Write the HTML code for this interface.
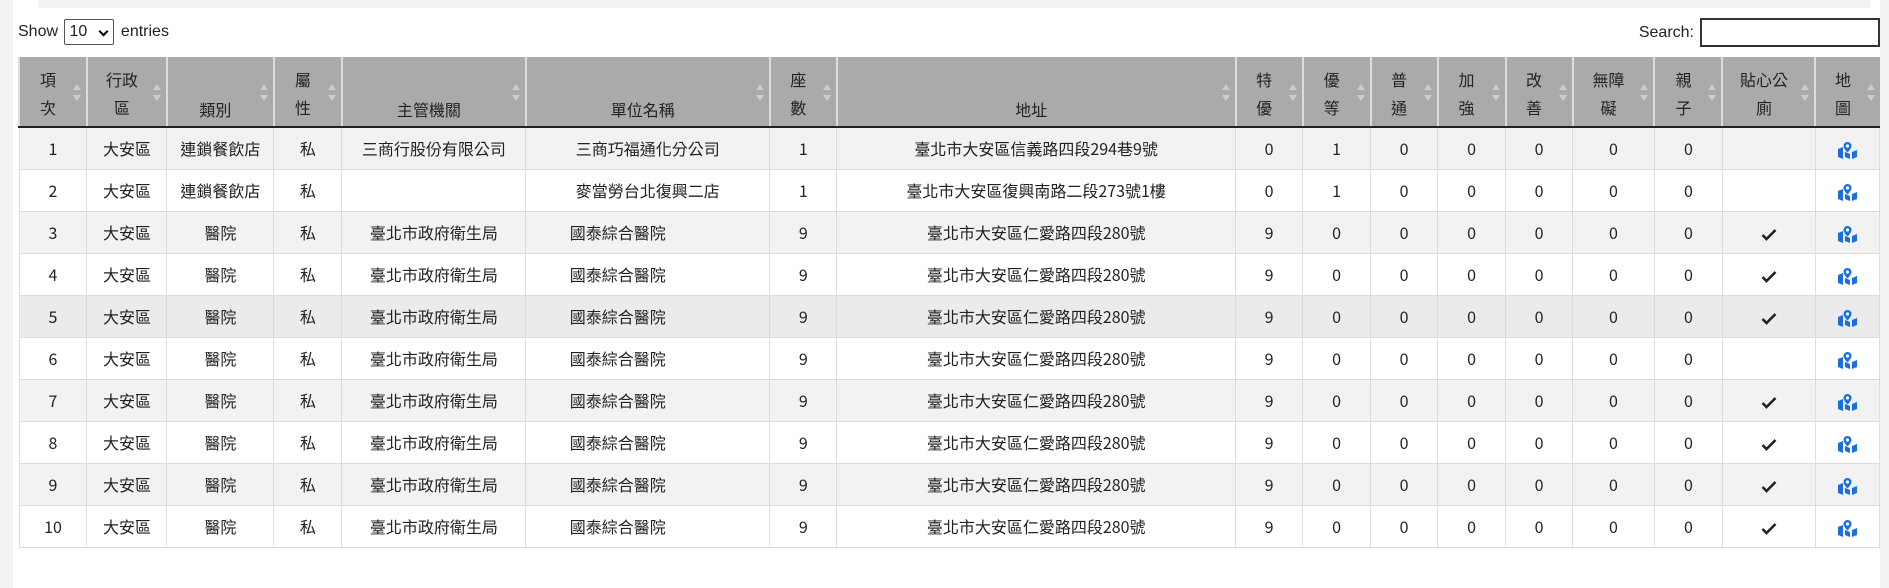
<!DOCTYPE html>
<html><head><meta charset="utf-8"><style>
html,body{margin:0;padding:0;}
body{width:1889px;height:588px;background:#f3f3f3;font-family:"Liberation Sans","Noto Sans CJK TC",sans-serif;color:#222;overflow:hidden;position:relative;}
.wrap{position:absolute;left:13px;top:0;width:1867px;height:588px;background:#fff;}
.bar{position:absolute;left:25px;top:0;width:1832px;height:8px;background:#f3f3f3;}
.show{position:absolute;left:5px;top:18px;font-size:16px;line-height:28px;}
.show .sel{display:inline-block;width:50px;height:26px;border:1px solid #555;border-radius:2px;vertical-align:middle;box-sizing:border-box;font-size:16px;line-height:24px;padding-left:4px;position:relative;margin:0 2px;}
.show .sel:after{content:"";position:absolute;right:6px;top:8px;width:5px;height:5px;border-right:2px solid #000;border-bottom:2px solid #000;transform:rotate(45deg);}
.search{position:absolute;right:0;top:18px;font-size:16px;line-height:29px;}
.search .in{display:inline-block;width:180px;height:29px;border:2px solid #333;box-sizing:border-box;vertical-align:middle;margin-left:6px;}
table{position:absolute;left:5px;top:57px;border-collapse:collapse;table-layout:fixed;font-size:16px;font-family:"Noto Sans CJK TC",sans-serif;}
th{background:#aaa;height:70px;font-weight:normal;color:#222;border-left:2px solid #ddd;border-bottom:2px solid #222;position:relative;line-height:28px;padding:2px 14px 0 4px;vertical-align:middle;box-sizing:border-box;}
th.b{vertical-align:bottom;padding-bottom:3px;}
th:after{content:"";position:absolute;right:5px;top:27px;border:4px solid transparent;border-bottom:6px solid #ccc;border-top:none;}
th:before{content:"";position:absolute;right:5px;top:38px;border:4px solid transparent;border-top:6px solid #ccc;border-bottom:none;}
tr.r{height:42px;}
td{border:1px solid #ddd;text-align:center;padding:0;color:#222;line-height:20px;vertical-align:middle;}
tr.o td{background:#f2f2f2;}
tr.h td{background:#ebebeb;}
tr.e td{background:#fff;}
.map{display:inline-block;vertical-align:middle;}
</style></head><body>
<div class="wrap">
<div class="bar"></div>
<div class="show">Show <span class="sel">10</span> entries</div>
<div class="search">Search:<span class="in"></span></div>
<table>
<colgroup><col style="width:68px"><col style="width:80px"><col style="width:107px"><col style="width:68px"><col style="width:184px"><col style="width:244px"><col style="width:67px"><col style="width:399px"><col style="width:67px"><col style="width:68px"><col style="width:67px"><col style="width:68px"><col style="width:67px"><col style="width:82px"><col style="width:68px"><col style="width:93px"><col style="width:64px"></colgroup>
<tr><th>項<br>次</th><th>行政<br>區</th><th class="b">類別</th><th>屬<br>性</th><th class="b">主管機關</th><th class="b">單位名稱</th><th>座<br>數</th><th class="b">地址</th><th>特<br>優</th><th>優<br>等</th><th>普<br>通</th><th>加<br>強</th><th>改<br>善</th><th>無障<br>礙</th><th>親<br>子</th><th>貼心公<br>廁</th><th>地<br>圖</th></tr>
<tbody id="b"></tbody>
</table>
</div>
<script>
var rows=[["1","大安區","連鎖餐飲店","私","三商行股份有限公司","三商巧福通化分公司","1","臺北市大安區信義路四段294巷9號","0","1",""],
["2","大安區","連鎖餐飲店","私","","麥當勞台北復興二店","1","臺北市大安區復興南路二段273號1樓","0","1",""]];
var ck=[1,1,1,0,1,1,1,1];
for(var i=3;i<=10;i++)rows.push([""+i,"大安區","醫院","私","臺北市政府衛生局","國泰綜合醫院","9","臺北市大安區仁愛路四段280號","9","0",ck[i-3]?"✓":""]);
var map='<svg class="map" width="19" height="17" viewBox="0 0 19 17"><path d="M0 7 L5 5 L5 17 L0 15Z M7 10 L12 12 L12 17 L7 15Z M14 10 L19 8 L19 15 L14 17Z" fill="#1a6fe0"/><path d="M9.5 0 A4 4 0 0 1 13.5 4 C13.5 6.5 9.5 10.5 9.5 10.5 C9.5 10.5 5.5 6.5 5.5 4 A4 4 0 0 1 9.5 0Z" fill="#1a6fe0"/><circle cx="9.5" cy="4" r="1.6" fill="#fff"/></svg>';
var chk='<svg width="16" height="13" viewBox="0 0 16 13" style="vertical-align:middle"><path d="M1.5 7 L5.5 11 L14.5 2" stroke="#222" stroke-width="2.6" fill="none"/></svg>';
var h="";
rows.forEach(function(r,k){
var cls=k==4?"h":(k%2==0?"o":"e");
var unit=r[5]=="國泰綜合醫院"?'<td style="padding-right:60px">':'<td>';
h+='<tr class="r '+cls+'"><td>'+r[0]+'</td><td>'+r[1]+'</td><td>'+r[2]+'</td><td>'+r[3]+'</td><td>'+r[4]+'</td>'+unit+r[5]+'</td><td>'+r[6]+'</td><td>'+r[7]+'</td><td>'+r[8]+'</td><td>'+r[9]+'</td><td>0</td><td>0</td><td>0</td><td>0</td><td>0</td><td>'+(r[10]?chk:'')+'</td><td>'+map+'</td></tr>';
});
document.getElementById("b").innerHTML=h;
</script>
</body></html>
